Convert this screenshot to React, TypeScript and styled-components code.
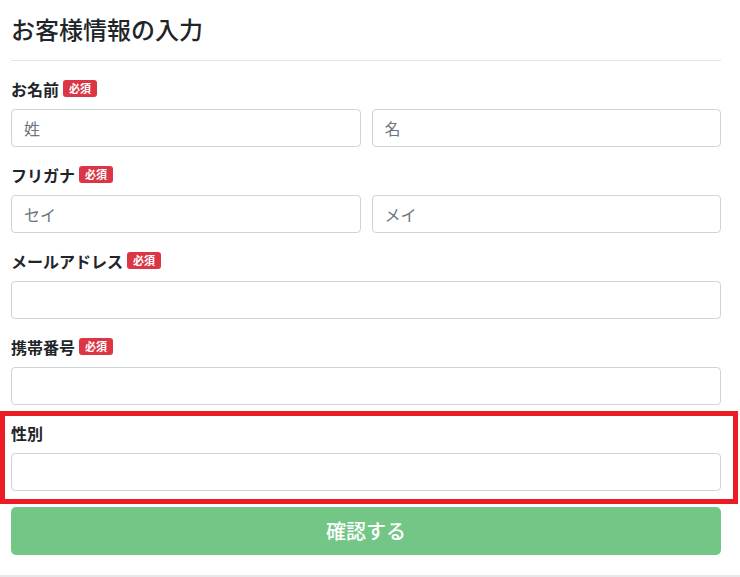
import styled, { createGlobalStyle } from 'styled-components'

const GlobalStyle = createGlobalStyle`
    body {
        margin: 0;
        background: #fff;
        color: #212529;
        font-family: 'Noto Sans CJK JP', 'Noto Sans', sans-serif;
    }
`

type Field = {
    label: string
    required?: boolean
    placeholders: string[]
    highlight?: boolean
}

const fields: Field[] = [
    { label: 'お名前', required: true, placeholders: ['姓', '名'] },
    { label: 'フリガナ', required: true, placeholders: ['セイ', 'メイ'] },
    { label: 'メールアドレス', required: true, placeholders: [''] },
    { label: '携帯番号', required: true, placeholders: [''] },
    { label: '性別', placeholders: [''], highlight: true },
]

const App = () => {
    return (
        <>
            <GlobalStyle />
            <Page>
                <Title>お客様情報の入力</Title>
                <Divider />
                {fields.map((f) => (
                    <Group key={f.label} $highlight={f.highlight}>
                        <Label>
                            {f.label}
                            {f.required && <Badge>必須</Badge>}
                        </Label>
                        <InputRow>
                            {f.placeholders.map((p, i) => (
                                <Input key={i} placeholder={p} />
                            ))}
                        </InputRow>
                    </Group>
                ))}
                <SubmitButton disabled>確認する</SubmitButton>
            </Page>
            <Footer />
        </>
    )
}

export default App

const Page = styled.div`
    padding: 15px 19px 0 11px;
`

const Title = styled.h4`
    margin: 0;
    font-size: 24px;
    font-weight: 500;
    line-height: 1.2;
`

const Divider = styled.hr`
    margin: 16px 0;
    border: 0;
    border-top: 1px solid #e2e4e7;
`

const Group = styled.div<{ $highlight?: boolean }>`
    position: relative;
    margin-bottom: 16px;

    ${(p) => p.$highlight && `
        &::after {
            content: '';
            position: absolute;
            top: -10px;
            left: -11px;
            right: -17px;
            bottom: -13px;
            border: 5px solid #ec1c24;
            pointer-events: none;
        }
    `}
`

const Label = styled.div`
    display: flex;
    align-items: center;
    gap: 4px;
    margin-bottom: 8px;
    font-size: 16px;
    font-weight: 700;
    line-height: 24px;
`

const Badge = styled.span`
    display: inline-block;
    padding: 2px 6px;
    border-radius: 3px;
    background: #dc3545;
    color: #fff;
    font-size: 11px;
    font-weight: 700;
    line-height: 13px;
`

const InputRow = styled.div`
    display: flex;
    gap: 11px;
`

const Input = styled.input`
    flex: 1;
    min-width: 0;
    box-sizing: border-box;
    height: 38px;
    padding: 6px 12px;
    border: 1px solid #ced4da;
    border-radius: 4px;
    font-family: inherit;
    font-size: 16px;
    color: #495057;

    &::placeholder {
        color: #6c757d;
    }
`

const SubmitButton = styled.button`
    display: block;
    width: 100%;
    height: 48px;
    border: 0;
    border-radius: 5px;
    background: #74c687;
    color: #fff;
    font-family: inherit;
    font-size: 20px;
    font-weight: 500;
`

const Footer = styled.div`
    margin-top: 20px;
    border-top: 2px solid #e6e8ea;
    height: 10px;
`
